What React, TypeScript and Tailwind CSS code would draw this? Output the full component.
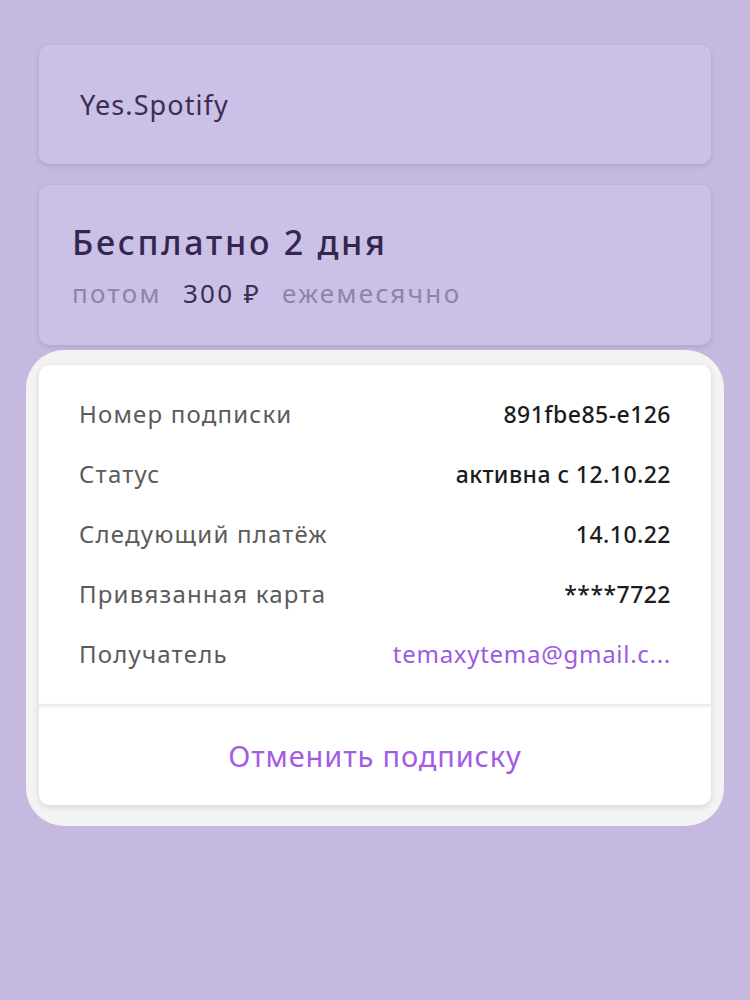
const rows: { label: string; value: string; accent?: boolean }[] = [
  { label: "Номер подписки", value: "891fbe85-e126" },
  { label: "Статус", value: "активна с 12.10.22" },
  { label: "Следующий платёж", value: "14.10.22" },
  { label: "Привязанная карта", value: "****7722" },
  { label: "Получатель", value: "temaxytema@gmail.c...", accent: true },
];

export default function App() {
  return (
    <div
      className="min-h-[1000px] w-[750px] bg-[#c5b9df] pt-[45px]"
      style={{ fontFamily: '"Noto Sans", "Open Sans", sans-serif' }}
    >
      <div className="mx-[39px] flex h-[119px] items-center rounded-[10px] bg-[#cbc0e6] px-[41px] pt-[2px] shadow-[0_2px_5px_rgba(80,60,130,0.18)]">
        <span className="text-[27px] tracking-[0.04em] text-[#3b2d56]">
          Yes.Spotify
        </span>
      </div>

      <div className="mx-[39px] mt-[21px] flex h-[160px] flex-col justify-center rounded-[10px] bg-[#cbc0e6] px-[33px] shadow-[0_2px_5px_rgba(80,60,130,0.18)]">
        <div className="text-[34px] font-medium leading-[40px] tracking-[0.08em] text-[#33264f]">
          Бесплатно 2 дня
        </div>
        <div className="mt-[16px] flex gap-[21px] text-[26px] leading-[30px] tracking-[0.09em]">
          <span className="text-[#8e84a6]">потом</span>
          <span className="text-[#3b2d56]">300 ₽</span>
          <span className="text-[#8e84a6]">ежемесячно</span>
        </div>
      </div>

      <div className="mx-[26px] mt-[5px] rounded-[38px] bg-[#f3f3f3] px-[13px] pb-[21px] pt-[15px]">
        <div className="overflow-hidden rounded-[10px] bg-white shadow-[0_2px_6px_rgba(0,0,0,0.12)]">
          <div className="flex flex-col px-[40px] pb-[20px] pt-[19px]">
            {rows.map((row) => (
              <div
                key={row.label}
                className="flex h-[60px] items-center justify-between gap-6"
              >
                <span className="shrink-0 text-[24px] tracking-[0.05em] text-[#5b5b5b]">
                  {row.label}
                </span>
                <span
                  className={
                    row.accent
                      ? "max-w-[290px] truncate text-[24px] tracking-[0.03em] text-[#9c5ae2]"
                      : "truncate text-[23px] font-medium tracking-[0.02em] text-[#1c1c1c]"
                  }
                >
                  {row.value}
                </span>
              </div>
            ))}
          </div>
          <div className="h-[2px] bg-[#ececec] shadow-[0_1px_3px_rgba(0,0,0,0.08)]" />
          <div className="flex h-[99px] items-center justify-center text-[29px] tracking-[0.03em] text-[#a25de2]">
            Отменить подписку
          </div>
        </div>
      </div>
    </div>
  );
}
